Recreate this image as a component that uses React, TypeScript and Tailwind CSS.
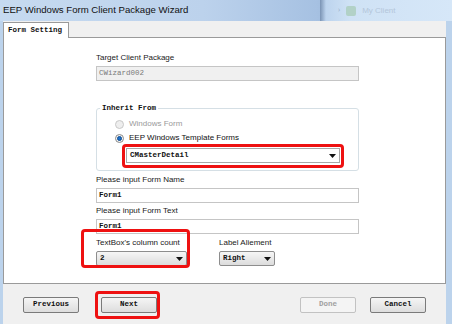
import React from "react";

const mono = "font-['Liberation_Mono',monospace]";
const sans = "font-['Liberation_Sans',Arial,sans-serif]";

function Arrow() {
  return (
    <svg width="7" height="4" viewBox="0 0 7 4" className="shrink-0">
      <path d="M0 0h7L3.5 4z" fill="#111" />
    </svg>
  );
}

function Radio({ checked, disabled }: { checked?: boolean; disabled?: boolean }) {
  return (
    <span
      className={
        "w-[9px] h-[9px] rounded-full border flex items-center justify-center shrink-0 " +
        (disabled ? "border-[#c8c8c8] bg-[#eeeeee]" : "border-[#8a8a8a] bg-[#f4f4f4]")
      }
    >
      {checked && <span className="w-[5px] h-[5px] rounded-full bg-[#1c6fc9] border border-[#0d4c91]" />}
    </span>
  );
}

function Label({ children }: { children: React.ReactNode }) {
  return <div className={`${sans} text-[8px] leading-[10px] text-[#1a1a1a]`}>{children}</div>;
}

function TextBox({ value, disabled }: { value: string; disabled?: boolean }) {
  return (
    <div
      className={
        `${mono} w-[263px] h-[15px] border flex items-center px-[2px] text-[7.5px] ` +
        (disabled ? "bg-[#f0f0f0] border-[#c5c5c5] text-[#7a7a7a]" : "bg-white border-[#c5c5c5] text-[#111] font-bold")
      }
    >
      {value}
    </div>
  );
}

function DropButton({ value, width }: { value: string; width: string }) {
  return (
    <div
      className={`${width} h-[15px] rounded-[2px] border border-[#8d8d8d] bg-[linear-gradient(#f6f6f6,#dcdcdc)] flex items-center justify-between px-[3px]`}
    >
      <span className={`${mono} text-[7.5px] font-bold text-[#111]`}>{value}</span>
      <Arrow />
    </div>
  );
}

function Button({ label, disabled }: { label: string; disabled?: boolean }) {
  return (
    <div
      className={
        `${mono} w-[56px] h-[16px] rounded-[2px] border flex items-center justify-center text-[7.5px] font-bold ` +
        (disabled
          ? "border-[#c2c2c2] bg-[#f4f4f4] text-[#a0a0a0]"
          : "border-[#7a7a7a] bg-[linear-gradient(#f5f5f5,#dddddd)] text-[#111]")
      }
    >
      {label}
    </div>
  );
}

export default function App() {
  return (
    <div className="w-[452px] h-[324px] bg-[#bcd3ec] flex flex-col overflow-hidden">
      {/* Title bar */}
      <div className="relative h-[21px] shrink-0 bg-[linear-gradient(90deg,#c6daf0_0%,#bcd2ec_45%,#a6c1e2_70%,#a4bfe0_71%)] flex items-center pl-[3px]">
        <span className={`${sans} text-[9.6px] text-[#111]`}>EEP Windows Form Client Package Wizard</span>
        <div className="absolute left-[320px] top-0 h-full w-[132px] bg-[linear-gradient(90deg,#7a93b4_0px,#bdd4ee_6px,#cfe2f5_30px,#d6e7f8)] flex items-center pl-[18px] gap-[6px]">
          <span className="text-[#9db3cc] text-[7px]">›</span>
          <span className="w-[10px] h-[10px] rounded-[2px] bg-[#9fc7a8] opacity-60" />
          <span className={`${sans} text-[8px] text-[#b4c6da]`}>My Client</span>
        </div>
      </div>

      {/* Client area */}
      <div className="ml-[3px] mr-[6px] flex-1 bg-[#f0f0f0] flex flex-col">
        {/* Tab strip */}
        <div className="h-[16px] shrink-0 flex items-end">
          <div className={`${mono} h-[16px] w-[66px] border border-b-0 border-[#9a9a9a] bg-white flex items-center pl-[4px] text-[7.5px] font-bold text-[#111] -mb-px relative z-10`}>
            Form Setting
          </div>
        </div>

        {/* Panel */}
        <div className="h-[247px] shrink-0 bg-white border border-[#9a9a9a] pl-[92px] pt-[15px] flex flex-col">
          <Label>Target Client Package</Label>
          <div className="mt-[3px]">
            <TextBox value="CWizard002" disabled />
          </div>

          {/* Inherit From group */}
          <div className="mt-[27px] w-[263px] h-[63px] border border-[#d5dfe5] rounded-[3px] relative pt-[10px] pl-[18px]">
            <span className={`${mono} absolute left-[3px] -top-[6px] bg-white px-[2px] text-[7.5px] font-bold text-[#111] leading-[10px]`}>
              Inherit From
            </span>
            <div className="flex items-center gap-[5px] h-[10px]">
              <Radio disabled />
              <span className={`${sans} text-[8px] text-[#9a9a9a]`}>Windows Form</span>
            </div>
            <div className="flex items-center gap-[5px] h-[10px] mt-[4px]">
              <Radio checked />
              <span className={`${sans} text-[8px] text-[#111]`}>EEP Windows Template Forms</span>
            </div>
            <div className="relative mt-[5px] ml-[11px] w-[214px] h-[15px] border border-[#a8a8a8] bg-white flex items-center justify-between px-[3px]">
              <span className={`${mono} text-[7.5px] font-bold text-[#111]`}>CMasterDetail</span>
              <Arrow />
              <span className="absolute -left-[5px] -top-[5px] w-[222px] h-[24px] border-[3px] border-[#ee1111] rounded-[4px]" />
            </div>
          </div>

          <div className="mt-[4px]">
            <Label>Please input Form Name</Label>
          </div>
          <div className="mt-[3px]">
            <TextBox value="Form1" />
          </div>
          <div className="mt-[3px]">
            <Label>Please input Form Text</Label>
          </div>
          <div className="mt-[3px]">
            <TextBox value="Form1" />
          </div>

          <div className="mt-[4px] flex gap-[32px]">
            <div className="relative flex flex-col gap-[3px]">
              <Label>TextBox's column count</Label>
              <DropButton value="2" width="w-[91px]" />
              <span className="absolute -left-[15px] -top-[9px] w-[109px] h-[39px] border-[3px] border-[#ee1111] rounded-[4px]" />
            </div>
            <div className="flex flex-col gap-[3px]">
              <Label>Label Aliement</Label>
              <DropButton value="Right" width="w-[56px]" />
            </div>
          </div>
        </div>

        {/* Bottom buttons */}
        <div className="flex-1 flex items-start pt-[13px] pl-[20px]">
          <Button label="Previous" />
          <div className="relative ml-[22px]">
            <Button label="Next" />
            <span className="absolute -left-[6px] -top-[6px] w-[65px] h-[28px] border-[3px] border-[#ee1111] rounded-[4px]" />
          </div>
          <div className="ml-[143px]">
            <Button label="Done" disabled />
          </div>
          <div className="ml-[14px]">
            <Button label="Cancel" />
          </div>
        </div>
      </div>
    </div>
  );
}
